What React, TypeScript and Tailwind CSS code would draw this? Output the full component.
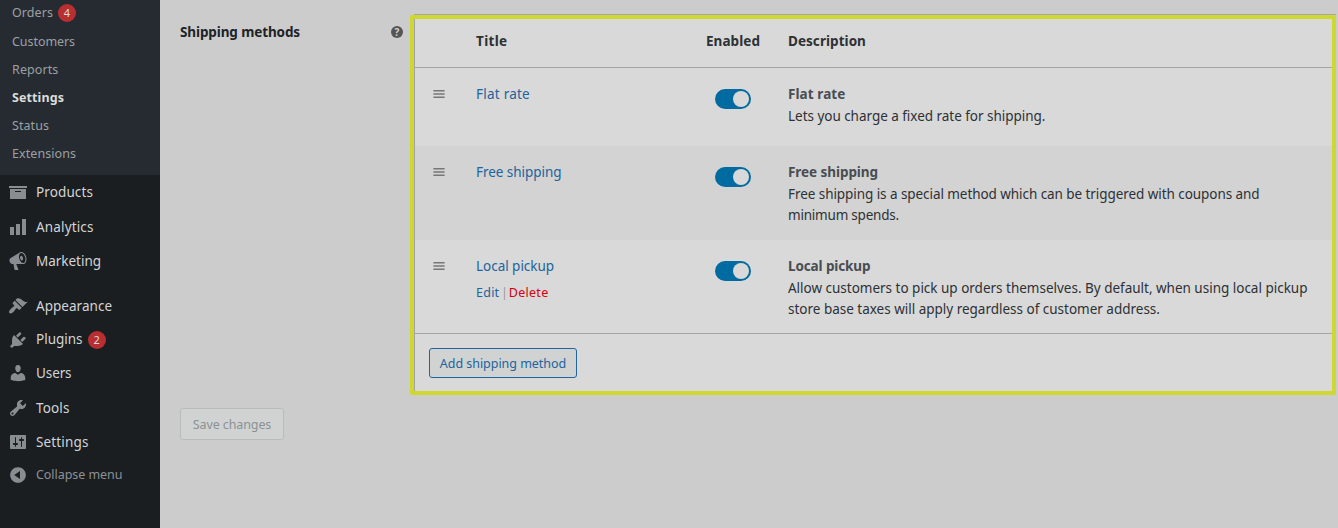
import type { ReactNode } from "react";

const icons: Record<string, string> = {
  Products: "M19 4v2H1V4h18zM2 7h16v10H2V7zm11 3V9H7v1h6z",
  Analytics: "M18 18V2h-4v16h4zm-6 0V7H8v11h4zm-6 0v-8H2v8h4z",
  Marketing:
    "M18.15 5.94c.46 1.62.38 3.22-.02 4.48-.42 1.28-1.26 2.18-2.3 2.48-.16.06-.26.06-.4.06-.06.02-.12.02-.18.02-.06.02-.14.02-.22.02h-6.8l2.22 5.5c.02.14-.06.26-.14.34-.08.1-.24.16-.34.16H6.95c-.1 0-.26-.06-.34-.16-.08-.08-.16-.2-.14-.34l-1-5.5H4.25l-.02-.02c-.5.06-1.08-.18-1.54-.62s-.88-1.08-1.06-1.88c-.24-.8-.2-1.56-.02-2.2.18-.62.58-1.08 1.06-1.3l.02-.02 9-5.4c.1-.06.18-.1.24-.16.06-.04.14-.08.24-.12.16-.08.28-.12.5-.18 1.04-.3 2.24.1 3.22.98s1.84 2.24 2.26 3.86zm-2.58 5.98h-.02c.4-.1.74-.34 1.04-.7.58-.7.86-1.76.86-3.04 0-.64-.1-1.3-.28-1.98-.34-1.36-1.02-2.5-1.78-3.24s-1.68-1.1-2.46-.88c-.82.22-1.4.96-1.7 2-.32 1.04-.28 2.36.06 3.72.38 1.36 1 2.5 1.8 3.24.78.74 1.62 1.1 2.48.88zm-2.54-7.08c.22-.04.42-.02.62.04.38.16.76.48 1.02 1s.42 1.2.42 1.78c0 .3-.04.56-.12.8-.18.48-.44.84-.86.94-.34.1-.8-.06-1.14-.4s-.64-.86-.78-1.5c-.18-.62-.12-1.24.02-1.72s.48-.84.82-.94z",
  Appearance:
    "M14.48 11.06L7.41 3.99l1.5-1.5c.5-.56 2.3-.47 3.51.32 1.21.8 1.43 1.28 2.91 2.1 1.18.64 2.45 1.26 4.45.85zm-.71.71L6.7 4.7 4.93 6.47c-.39.39-.39 1.02 0 1.41l1.06 1.06c.39.39.39 1.03 0 1.42-.6.6-1.43 1.11-2.21 1.69-.35.26-.7.53-1.01.84C1.43 14.23.4 16.08 1.4 17.07c.99 1 2.84-.03 4.18-1.36.31-.31.58-.66.85-1.02.57-.78 1.08-1.61 1.69-2.21.39-.39 1.02-.39 1.41 0l1.06 1.06c.39.39 1.02.39 1.41 0z",
  Plugins:
    "M13.11 4.36L9.87 7.6 8 5.73l3.24-3.24c.35-.34 1.05-.2 1.56.32.52.51.66 1.21.31 1.55zm-8 1.77l.91-1.12 9.01 9.01-1.19.84c-.71.71-2.63 1.16-3.82 1.16H6.14L4.9 17.26c-.59.59-1.54.59-2.12 0-.59-.58-.59-1.53 0-2.12l1.24-1.24v-3.88c0-1.13.4-3.19 1.09-3.89zm7.26 3.97l3.24-3.24c.34-.35 1.04-.21 1.55.31.52.51.66 1.21.31 1.55l-3.24 3.25z",
  Users:
    "M10 9.25c-2.27 0-2.73-3.44-2.73-3.44C7 4.02 7.82 2 9.97 2c2.16 0 2.98 2.02 2.71 3.81 0 0-.41 3.44-2.68 3.44zm0 2.57L12.72 10c2.39 0 4.52 2.33 4.52 4.53v2.49s-3.65 1.13-7.24 1.13c-3.65 0-7.24-1.13-7.24-1.13v-2.49c0-2.25 1.94-4.48 4.47-4.48z",
  Tools:
    "M16.68 9.77c-1.34 1.34-3.3 1.67-4.95.99l-5.41 6.52c-.99.99-2.59.99-3.58 0s-.99-2.59 0-3.57l6.52-5.42c-.68-1.65-.35-3.61.99-4.95 1.28-1.28 3.12-1.62 4.72-1.06l-2.89 2.89 2.82 2.82 2.86-2.87c.53 1.58.18 3.39-1.08 4.65zM3.81 16.21c.4.39 1.04.39 1.43 0 .4-.4.4-1.04 0-1.43-.39-.4-1.03-.4-1.43 0-.39.39-.39 1.03 0 1.43z",
  Settings:
    "M18 16V4c0-.55-.45-1-1-1H3c-.55 0-1 .45-1 1v12c0 .55.45 1 1 1h14c.55 0 1-.45 1-1zM8 11h1c.55 0 1 .45 1 1s-.45 1-1 1H8v1.5c0 .28-.22.5-.5.5s-.5-.22-.5-.5V13H6c-.55 0-1-.45-1-1s.45-1 1-1h1V5.5c0-.28.22-.5.5-.5s.5.22.5.5V11zm5-2h-1c-.55 0-1-.45-1-1s.45-1 1-1h1V5.5c0-.28.22-.5.5-.5s.5.22.5.5V7h1c.55 0 1 .45 1 1s-.45 1-1 1h-1v5.5c0 .28-.22.5-.5.5s-.5-.22-.5-.5V9z",
  "Collapse menu":
    "M10 2.16c4.33 0 7.84 3.51 7.84 7.84s-3.51 7.84-7.84 7.84S2.16 14.33 2.16 10 5.71 2.16 10 2.16zm2 11.72V6.12L6.18 9.97z",
};

const submenu = [
  { label: "Orders", track: "tracking-[0.07px]", badge: "4" },
  { label: "Customers", track: "tracking-[-0.06px]" },
  { label: "Reports", track: "tracking-[0.1px]" },
  { label: "Settings", track: "tracking-[0.1px] font-bold text-[#dcdcdc]" },
  { label: "Status", track: "tracking-[0.06px]" },
  { label: "Extensions", track: "tracking-[0.07px]" },
];

const menu = [
  { label: "Products", row: "h-[34px]", track: "tracking-[0.11px]" },
  { label: "Analytics", row: "h-[35px]", track: "pt-px tracking-[0.15px]" },
  { label: "Marketing", row: "h-[34px]", track: "tracking-[-0.02px]" },
  { label: "Appearance", row: "mt-[11px] h-[34px]", track: "tracking-[0.03px]" },
  { label: "Plugins", row: "h-[33px]", track: "tracking-[-0.01px]", badge: "2" },
  { label: "Users", row: "h-[34px]", track: "tracking-[-0.1px]" },
  { label: "Tools", row: "h-[35px]", track: "pt-px tracking-[0.15px]" },
  { label: "Settings", row: "h-[34px]", track: "tracking-[0.14px]" },
];

const methods = [
  {
    title: "Flat rate",
    row: "h-[78px]",
    track: "tracking-[0.24px]",
    boldTrack: "tracking-[0.09px]",
    lines: [{ text: "Lets you charge a fixed rate for shipping.", track: "tracking-[-0.03px]" }],
  },
  {
    title: "Free shipping",
    row: "h-[94px] bg-[#d3d3d3]",
    track: "tracking-[-0.04px]",
    boldTrack: "tracking-[-0.06px]",
    lines: [
      { text: "Free shipping is a special method which can be triggered with coupons and", track: "tracking-[-0.065px]" },
      { text: "minimum spends.", track: "tracking-[-0.21px]" },
    ],
  },
  {
    title: "Local pickup",
    row: "h-[93px]",
    track: "tracking-[-0.03px]",
    boldTrack: "tracking-[-0.11px]",
    actions: true,
    lines: [
      { text: "Allow customers to pick up orders themselves. By default, when using local pickup", track: "tracking-[-0.01px]" },
      { text: "store base taxes will apply regardless of customer address.", track: "tracking-[-0.01px]" },
    ],
  },
];

function MenuIcon({ name }: { name: string }) {
  return (
    <svg viewBox="0 0 20 20" className="mr-2 h-5 w-5 shrink-0 fill-[#888d92]" fillRule="evenodd">
      <path d={icons[name]} />
    </svg>
  );
}

function Badge({ children }: { children: ReactNode }) {
  return (
    <span className="flex h-[18px] w-[18px] items-center justify-center rounded-full bg-[#b92e31] text-[11px] text-[#dcdcdc]">
      {children}
    </span>
  );
}

function Toggle() {
  return (
    <span className="flex h-5 w-9 items-center justify-end rounded-full bg-[#006ba1] pr-0.5">
      <span className="h-4 w-4 rounded-full bg-[#d9d9d9]" />
    </span>
  );
}

function Handle() {
  return (
    <svg viewBox="0 0 20 20" className="h-4 w-4 fill-[#777777]">
      <path d="M17 7V5H3v2h14zm0 4V9H3v2h14zm0 4v-2H3v2h14z" />
    </svg>
  );
}

function Sidebar() {
  return (
    <aside className="h-full w-40 shrink-0 overflow-hidden bg-[#1a1e21]">
      <ul className="h-[175px] bg-[#262b31] text-[12.5px] text-[#9ba0a4]">
        {submenu.map((s) => (
          <li key={s.label} className="flex h-7 items-center gap-[5px] pl-3 first:pb-0.5">
            <span className={s.track}>{s.label}</span>
            {s.badge && <Badge>{s.badge}</Badge>}
          </li>
        ))}
      </ul>
      <ul className="text-[13.5px] text-[#d3d4d5]">
        {menu.map((m) => (
          <li key={m.label} className={`flex items-center pl-2 ${m.row}`}>
            <MenuIcon name={m.label} />
            <span className={m.track}>{m.label}</span>
            {m.badge && <span className="ml-[5px] pt-px"><Badge>{m.badge}</Badge></span>}
          </li>
        ))}
        <li className="flex h-8 items-center pl-2 text-[12.5px] text-[#8c9094]">
          <MenuIcon name="Collapse menu" />
          <span className="tracking-[-0.05px]">Collapse menu</span>
        </li>
      </ul>
    </aside>
  );
}

export default function App() {
  return (
    <div className="flex h-[528px] w-[1338px] overflow-hidden bg-[#cccccc] font-['Noto_Sans',sans-serif] text-[13.5px] text-[#2d3135]">
      <Sidebar />
      <main className="flex flex-1">
        <div className="flex w-[250px] shrink-0 flex-col pl-5">
          <div className="mt-[22px] flex h-5 items-center justify-between pr-[7px]">
            <span className="font-bold tracking-[-0.11px] text-[#1d2327]">Shipping methods</span>
            <span className="flex h-3 w-3 items-center justify-center rounded-full bg-[#555555] text-[10px] font-bold text-[#d0d0d0]">
              ?
            </span>
          </div>
          <button className="mt-[366px] h-8 w-[104px] rounded-[3px] border border-[#b9bbbb] bg-[#d0d3d2] pt-0.5 text-[12.5px] tracking-[-0.1px] text-[#8c9196]">
            Save changes
          </button>
        </div>
        <div className="mt-3.5 w-[926px] shrink-0">
          <div className="ml-1 h-px bg-[#a5a7a9]" />
          <section className="h-[380px] rounded-[2px] border-4 border-[#cfd82e] bg-[#d9d9d9]">
            <div className="flex h-full flex-col border-l border-[#a3a5a8]">
              <div className="flex h-[49px] items-center border-b border-[#a3a5a8] pb-[3px] font-bold">
                <span className="w-[230px] pl-[61px] tracking-[0.35px]">Title</span>
                <span className="w-[143px] pl-[61px] tracking-[0.06px]">Enabled</span>
                <span className="tracking-[0.05px]">Description</span>
              </div>
              {methods.map((m) => (
                <div key={m.title} className={`flex ${m.row}`}>
                  <div className="flex w-[61px] pt-[18px] pl-[15.5px]">
                    <Handle />
                  </div>
                  <div className="w-[239px] pt-4 leading-[21px] text-[#21639c]">
                    <div className={m.track}>{m.title}</div>
                    {m.actions && (
                      <div className="mt-[5px] text-[12.5px] whitespace-pre">
                        <span className="tracking-[0.25px]">Edit</span>
                        <span className="pr-[1px] pl-[1.5px] text-[#999999]">|</span>
                        <span className="tracking-[0.28px] text-[#d8000c]">Delete</span>
                      </div>
                    )}
                  </div>
                  <div className="w-[73px] pt-[21px]">
                    <Toggle />
                  </div>
                  <div className="pt-4 leading-[21px] whitespace-nowrap">
                    <div className={`mb-px font-bold text-[#484d52] ${m.boldTrack}`}>{m.title}</div>
                    {m.lines.map((l) => (
                      <div key={l.text} className={l.track}>{l.text}</div>
                    ))}
                  </div>
                </div>
              ))}
              <div className="flex-1 border-t border-[#a3a5a8] pt-3.5 pl-3.5">
                <button className="h-[30px] w-[148px] rounded-[3px] border border-[#1f65a0] bg-[#d0d3d2] pt-0.5 text-[12.5px] tracking-[-0.03px] text-[#21639c]">
                  Add shipping method
                </button>
              </div>
            </div>
          </section>
        </div>
      </main>
    </div>
  );
}
